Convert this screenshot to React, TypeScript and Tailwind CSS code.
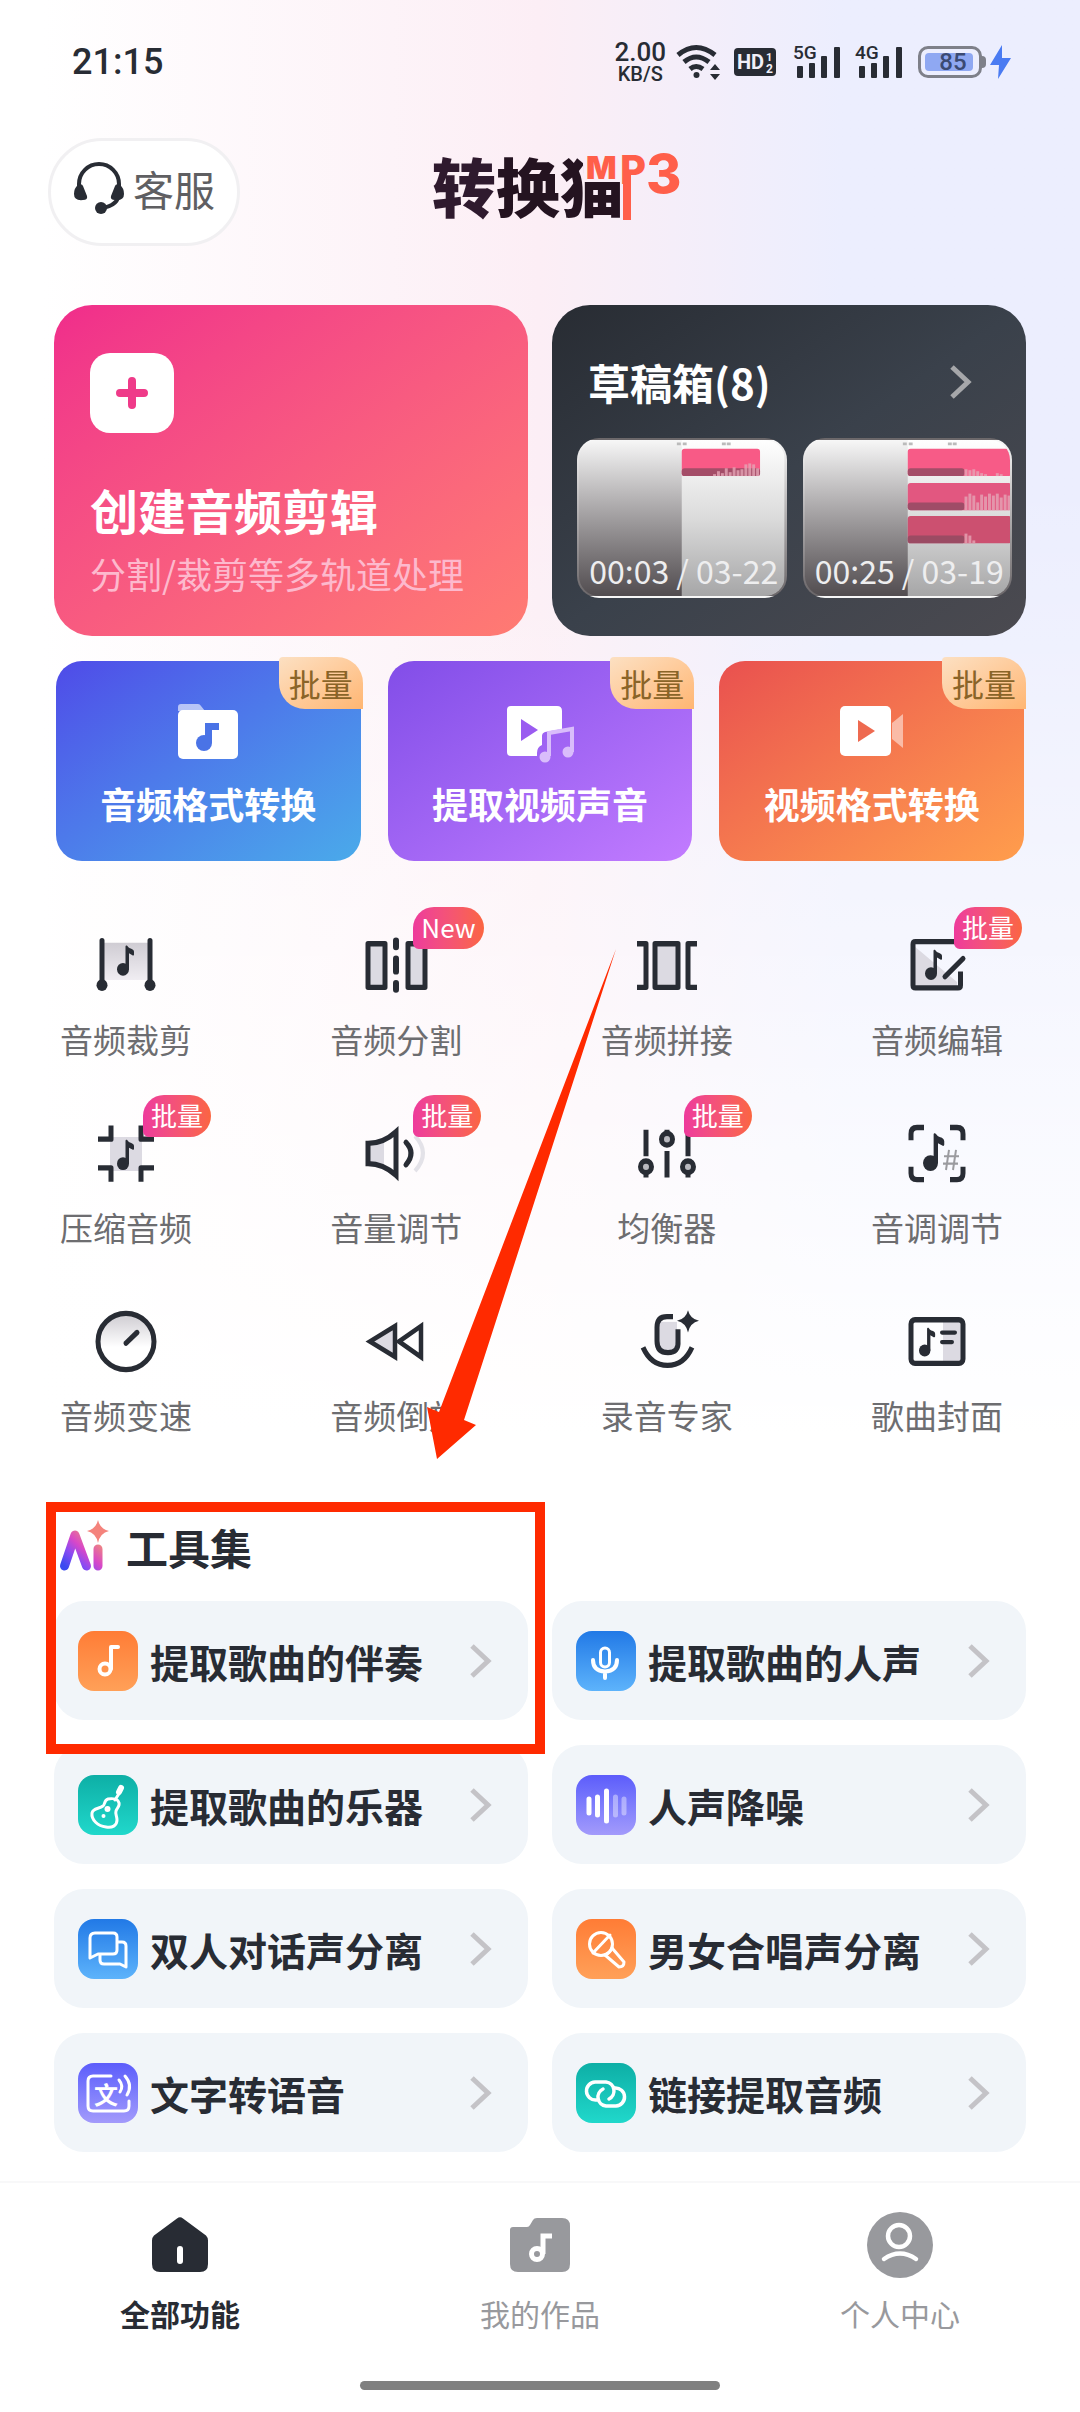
import type { ReactNode } from "react";

const INK = "#282c34";
const SHADE = "#dcdae2";

function Note({ x = 0, y = 0, s = 1 }: { x?: number; y?: number; s?: number }) {
  return (
    <g transform={`translate(${x} ${y}) scale(${s})`} fill={INK}>
      <circle cx="6" cy="22" r="6" />
      <path d="M8.5 0.5C8.5-.5 9.6-.7 10.4 0l1 1.2c1.500 1.500 5.600 1.300 5.600 4.300V8c0 1-.8 1.300-1.600.8L12 7v15H8.500z" />
    </g>
  );
}

function ToolSvg({ children }: { children: ReactNode }) {
  return (
    <svg
      viewBox="0 0 64 64"
      preserveAspectRatio="none"
      className="w-16 h-17 overflow-visible"
      fill="none"
      stroke={INK}
      strokeWidth="5"
      aria-hidden="true"
    >
      {children}
    </svg>
  );
}

const tools: { label: string; badge?: string; icon: ReactNode }[] = [
  {
    label: "音频裁剪",
    icon: (
      <ToolSvg>
        <defs>
          <linearGradient id="trim" x1="0" y1="0" x2="0" y2="1">
            <stop offset="0" stopColor="#cfccd3" />
            <stop offset="1" stopColor="#f0edf2" />
          </linearGradient>
        </defs>
        <path d="M8 11h48v35H8z" fill="url(#trim)" stroke="none" />
        <path d="M8 9v41M56 9v41" strokeLinecap="round" />
        <g fill={INK} stroke="none">
          <circle cx="8" cy="51" r="5.5" />
          <circle cx="56" cy="51" r="5.5" />
        </g>
        <g stroke="none"><Note x={23} y={14} /></g>
      </ToolSvg>
    ),
  },
  {
    label: "音频分割",
    badge: "New",
    icon: (
      <ToolSvg>
        <path d="M4 12h17v41H4zM44 12h17v41H44z" fill={SHADE} strokeLinejoin="round" />
        <path d="M32 9v6M32 26v12M32 49v6" strokeWidth="6" strokeLinecap="round" />
      </ToolSvg>
    ),
  },
  {
    label: "音频拼接",
    icon: (
      <ToolSvg>
        <path d="M20 12h23v41H20z" fill={SHADE} strokeLinejoin="round" />
        <path d="M2 12h9v41H2M62 12h-9v41h9" strokeLinejoin="round" />
      </ToolSvg>
    ),
  },
  {
    label: "音频编辑",
    badge: "批量",
    icon: (
      <ToolSvg>
        <path d="M9 14L52 48v5H9z" fill={SHADE} stroke="none" />
        <path d="M54 10H10.500Q8 10 8 12.500V51q0 2.500 2.500 2.500H53q2.500 0 2.500-2.500V38" />
        <path d="M40 43L58 26" strokeLinecap="round" />
        <g stroke="none"><Note x={20} y={18} /></g>
      </ToolSvg>
    ),
  },
  {
    label: "压缩音频",
    badge: "批量",
    icon: (
      <ToolSvg>
        <path d="M16 17h32v32H16z" fill={SHADE} stroke="none" />
        <path d="M4 19h13V6M60 19H47V6M4 46h13v13M60 46H47v13" strokeLinejoin="round" />
        <g stroke="none"><Note x={23} y={20} /></g>
      </ToolSvg>
    ),
  },
  {
    label: "音量调节",
    badge: "批量",
    icon: (
      <ToolSvg>
        <path d="M4 22h16v21H4z" fill={SHADE} stroke="none" />
        <path d="M4 23C15 23 24 19 32 12v41C24 46 15 42 4 42z" />
        <path d="M42 22q10 10 0 21" strokeLinecap="round" />
        <path d="M51 16q16 16 0 33" stroke="#e3e2e8" strokeWidth="4" />
      </ToolSvg>
    ),
  },
  {
    label: "均衡器",
    badge: "批量",
    icon: (
      <ToolSvg>
        <path d="M11 10v25M32 30v25M53 10v25M11 50v5M53 50v5M32 10v5" />
        <circle cx="11" cy="45" r="5.5" fill="#b9b9bf" />
        <circle cx="32" cy="19" r="5.5" fill="#b9b9bf" />
        <circle cx="53" cy="45" r="5.5" fill="#b9b9bf" />
      </ToolSvg>
    ),
  },
  {
    label: "音调调节",
    icon: (
      <ToolSvg>
        <path d="M6 20v-6q0-6 6-6h7M58 20v-6q0-6-6-6h-7M6 45v6q0 6 6 6h7M58 45v6q0 6-6 6h-7" />
        <g stroke="none"><Note x={18} y={14} s={1.25} /></g>
        <path d="M44 29l-3 19M51 29l-3 19M39 35h15M38 42h15" stroke="#9b9b9f" strokeWidth="2" />
      </ToolSvg>
    ),
  },
  {
    label: "音频变速",
    icon: (
      <ToolSvg>
        <defs>
          <linearGradient id="dial" x1="0" y1="0" x2="0" y2="1">
            <stop offset="0.1" stopColor="#d5d3d8" />
            <stop offset="0.6" stopColor="#fff" />
          </linearGradient>
        </defs>
        <ellipse cx="32" cy="32.5" rx="28" ry="26.5" fill="url(#dial)" />
        <path d="M32 34L43 24" strokeLinecap="round" />
      </ToolSvg>
    ),
  },
  {
    label: "音频倒放",
    icon: (
      <ToolSvg>
        <path d="M6 32.500L31 18v29z" fill={SHADE} strokeWidth="4.5" />
        <path d="M35 32.500L57 18v29z" strokeWidth="4.5" />
      </ToolSvg>
    ),
  },
  {
    label: "录音专家",
    icon: (
      <ToolSvg>
        <path d="M24 14h18v28H24z" fill={SHADE} stroke="none" />
        <path d="M38 9h-6q-10 0-10 10v13q0 11 11 11t10-11V21" />
        <path d="M8 38q8 17 24.500 17T57 38" />
        <path d="M53 3q2 8 11 10q-9 2-11 11q-2-9-11-11q9-2 11-10z" fill={INK} stroke="none" />
      </ToolSvg>
    ),
  },
  {
    label: "歌曲封面",
    icon: (
      <ToolSvg>
        <path d="M38 12h20v41H38z" fill={SHADE} stroke="none" />
        <rect x="6" y="12" width="52" height="41" rx="4" />
        <g stroke="none"><Note x={14} y={20} s={0.95} /></g>
        <path d="M37 24h13M37 33h10" strokeLinecap="round" strokeWidth="4" />
      </ToolSvg>
    ),
  },
];

function TileSvg({ children }: { children: ReactNode }) {
  return (
    <svg
      viewBox="0 0 60 60"
      className="w-full h-full"
      fill="none"
      stroke="#fff"
      strokeWidth="3"
      strokeLinecap="round"
      strokeLinejoin="round"
      aria-hidden="true"
    >
      {children}
    </svg>
  );
}

const ORANGE = "bg-linear-to-b from-[#ff7c35] to-[#ffa058]";
const BLUE = "bg-linear-to-b from-[#2179e6] to-[#5db3fb]";
const TEAL = "bg-linear-to-b from-[#0dafa6] to-[#20d8cb]";
const VIOLET = "bg-linear-to-b from-[#5d5cfb] to-[#a39afb]";

const aiTools: { label: string; tone: string; icon: ReactNode }[] = [
  {
    label: "提取歌曲的伴奏",
    tone: ORANGE,
    icon: (
      <TileSvg>
        <circle cx="27" cy="38" r="5.5" strokeWidth="4" />
        <path d="M33 38V16h7" strokeWidth="4" />
      </TileSvg>
    ),
  },
  {
    label: "提取歌曲的人声",
    tone: BLUE,
    icon: (
      <TileSvg>
        <rect x="24.5" y="17" width="9" height="19" rx="4.5" />
        <path d="M17 29q0 11 12 11.500Q41 40 41 29M29 41v6" strokeWidth="4" />
      </TileSvg>
    ),
  },
  {
    label: "提取歌曲的乐器",
    tone: TEAL,
    icon: (
      <TileSvg>
        <path d="M30 24c-4 1-3 6-5 7c-4 3-10 2-11 7c-1 7 6 13 14 14c6 1 11-1 11-7c0-4-2-6-1-9c1-3 4-5 3-8c-1-4-6-5-11-4z" />
        <circle cx="29.5" cy="34" r="3" fill="#fff" stroke="none" />
        <circle cx="25.5" cy="41" r="2" fill="#fff" stroke="none" />
        <path d="M37 25l5-8" />
        <path d="M41 17l2-4" strokeWidth="6" />
      </TileSvg>
    ),
  },
  {
    label: "人声降噪",
    tone: VIOLET,
    icon: (
      <TileSvg>
        <path d="M13 24v14M21.500 22v18M30.500 16v30" strokeWidth="5" />
        <path d="M39.500 22v18M48 24v14" strokeWidth="5" strokeOpacity="0.4" />
      </TileSvg>
    ),
  },
  {
    label: "双人对话声分离",
    tone: BLUE,
    icon: (
      <TileSvg>
        <path d="M17 14h18q4 0 4 4v13q0 4-4 4H20l-8 4V19q0-5 5-5z" />
        <path d="M40 23h4q4 0 4 4v21l-6-3H26q-4 0-4-4v-5" />
      </TileSvg>
    ),
  },
  {
    label: "男女合唱声分离",
    tone: ORANGE,
    icon: (
      <TileSvg>
        <circle cx="25" cy="25" r="11.5" />
        <path d="M34 16L17 34" />
        <path d="M36 29L48 43q0 5-5 5L29 36" />
        <path d="M36 29q-2 5-7 7" />
      </TileSvg>
    ),
  },
  {
    label: "文字转语音",
    tone: VIOLET,
    icon: (
      <TileSvg>
        <path d="M33 13H15q-5 0-5 5v25q0 5 5 5h31q5 0 5-5v-5" />
        <path d="M41 17q5 6 1 12M47 13q8 9 2 19" />
        <text
          x="28"
          y="41"
          textAnchor="middle"
          fontSize="24"
          fontWeight="700"
          fill="#fff"
          stroke="none"
        >
          文
        </text>
      </TileSvg>
    ),
  },
  {
    label: "链接提取音频",
    tone: TEAL,
    icon: (
      <TileSvg>
        <g strokeWidth="3.5">
          <path d="M21 37h-1a9 9 0 0 1-1-18h11a9 9 0 0 1 3 17" />
          <path d="M38 25h1a9 9 0 0 1 1 18H30a9 9 0 0 1-3-17" />
        </g>
      </TileSvg>
    ),
  },
];

const formats: { label: string; tone: string; icon: ReactNode }[] = [
  {
    label: "音频格式转换",
    tone: "bg-linear-to-br from-[#4f4ae8] to-[#4aaaea]",
    icon: (
      <svg viewBox="0 0 68 60" className="w-17 h-15" aria-hidden="true">
        <path d="M4 10V6q0-3 3-3h17q2 0 3 2l4 5z" fill="#fff" fillOpacity="0.6" />
        <rect x="4" y="9" width="60" height="49" rx="5" fill="#fff" />
        <g fill="#4a73e6">
          <circle cx="30" cy="42" r="8" />
          <path d="M31 22h14v7h-7v13h-7z" />
        </g>
      </svg>
    ),
  },
  {
    label: "提取视频声音",
    tone: "bg-linear-to-br from-[#824de8] to-[#c27bff]",
    icon: (
      <svg viewBox="0 0 68 60" className="w-17 h-15 overflow-visible" aria-hidden="true">
        <path
          d="M5 5h46q5 0 5 5v18l-17 3q-3 1-3 4v9q-5 2-5 8v3H5q-4 0-4-4V9q0-4 4-4z"
          fill="#fff"
        />
        <path d="M15 18l17 11-17 11z" fill="#9a5bf0" />
        <g fill="none" stroke="#d9bdfb" strokeWidth="4">
          <path d="M43 55V32l23-4v23" />
          <circle cx="39" cy="56" r="3.5" fill="#d9bdfb" />
          <circle cx="62" cy="51" r="3.5" fill="#d9bdfb" />
        </g>
      </svg>
    ),
  },
  {
    label: "视频格式转换",
    tone: "bg-linear-to-br from-[#e9504f] to-[#ff9d4c]",
    icon: (
      <svg viewBox="0 0 68 60" className="w-17 h-15" aria-hidden="true">
        <path d="M54 22l11-9v34l-11-9z" fill="#fff" fillOpacity="0.5" />
        <rect x="2" y="5" width="51" height="50" rx="5" fill="#fff" />
        <path d="M20 19l17 11-17 11z" fill="#ee6a50" />
      </svg>
    ),
  },
];

const drafts = [
  {
    text: "00:03 / 03-22",
    clips: [{ y: 9, w: 80, fill: "#f85a86", from: 32, wave: [2, 5, 3, 8, 4, 9, 6, 7, 12, 13, 12, 8] }],
  },
  {
    text: "00:25 / 03-19",
    clips: [
      { y: 9, w: 106, fill: "#f75b87", from: 58, wave: [7, 6, 7, 5, 3, 2, 0, 0, 3, 2, 0, 0] },
      { y: 44, w: 106, fill: "#e25780", from: 58, wave: [14, 17, 15, 8, 16, 14, 17, 15, 17, 13, 16, 15] },
      { y: 78, w: 106, fill: "#cc5070", from: 58, wave: [10, 8, 3, 0, 0, 0, 0, 0, 0, 0, 0, 0] },
    ],
  },
];

const tabs: { label: string; active?: boolean; icon: ReactNode }[] = [
  {
    label: "全部功能",
    active: true,
    icon: (
      <svg viewBox="0 0 68 68" className="w-17 h-17" aria-hidden="true">
        <path
          d="M31 7.500q3-2.500 6 0l23 17q2 2 2 5V53q0 8-8 8H14q-8 0-8-8V29.500q0-3 2-5z"
          fill={INK}
        />
        <path d="M34 38v12" stroke="#fff" strokeWidth="6" strokeLinecap="round" />
      </svg>
    ),
  },
  {
    label: "我的作品",
    icon: (
      <svg viewBox="0 0 68 68" className="w-17 h-17" aria-hidden="true">
        <path
          d="M7 16h14q2 0 3-2l3-5q1-2 4-2h25q8 0 8 8v38q0 8-8 8H12q-8 0-8-8V19q0-3 3-3z"
          fill="#98999d"
        />
        <g fill="none" stroke="#fff" strokeWidth="5">
          <circle cx="31" cy="43" r="5.5" />
          <path d="M37 43V25h9" />
        </g>
      </svg>
    ),
  },
  {
    label: "个人中心",
    icon: (
      <svg viewBox="0 0 68 68" className="w-17 h-17" aria-hidden="true">
        <circle cx="34" cy="34" r="33" fill="#98999d" />
        <g fill="none" stroke="#fff" strokeWidth="4.5" strokeLinecap="round">
          <circle cx="33" cy="25" r="11" />
          <path d="M18 48q16-11 32 0" />
        </g>
      </svg>
    ),
  },
];

function Chevron({ color }: { color: string }) {
  return (
    <svg viewBox="0 0 22 36" className="w-[22px] h-9 shrink-0" aria-hidden="true">
      <path d="M2 3l16 15L2 33" fill="none" stroke={color} strokeWidth="5" />
    </svg>
  );
}

function Signal({ label }: { label: string }) {
  return (
    <svg viewBox="0 0 48 36" className="w-12 h-9 overflow-visible" aria-hidden="true">
      <text x="-1" y="15" fontSize="19" fontWeight="500" fill={INK} fontFamily="Roboto, sans-serif">
        {label}
      </text>
      <g fill={INK}>
        <rect x="3" y="22" width="6" height="12" rx="1" />
        <rect x="15" y="19" width="6" height="15" rx="1" />
        <rect x="27" y="12" width="6" height="22" rx="1" />
        <rect x="40" y="3" width="6" height="31" rx="1" />
      </g>
    </svg>
  );
}

function StatusBar() {
  return (
    <div className="flex items-center justify-between h-31 pl-18 pr-17 text-[#282c34] font-[Roboto,sans-serif]">
      <span className="text-[36px] leading-none font-medium">21:15</span>

      <div className="flex items-center">
        <div className="flex flex-col items-center mr-2.5 font-medium">
          <span className="text-[26px] leading-6">2.00</span>
          <span className="text-[20px] leading-5">KB/S</span>
        </div>

        {/* Wifi */}
        <svg viewBox="0 0 44 36" className="w-11 h-9 mr-3.5" aria-hidden="true">
          <g fill="none" stroke={INK} strokeWidth="5">
            <path d="M2 11q18-15 37 0" />
            <path d="M8 18q12-10 25 0" />
            <path d="M14 25q6-5 13 0" />
          </g>
          <circle cx="20.5" cy="31" r="3" fill={INK} />
          <path d="M39 20l5 6H34zM39 36l5-6H34z" fill={INK} />
        </svg>

        {/* HD */}
        <svg viewBox="0 0 42 28" className="w-[42px] h-7 mr-4.5" aria-hidden="true">
          <rect width="42" height="28" rx="4" fill={INK} />
          <g fill="#f0eff8" fontFamily="Roboto, sans-serif" fontWeight="700">
            <text x="3" y="21" fontSize="20">HD</text>
            <text x="32" y="13" fontSize="11">1</text>
            <text x="32" y="25" fontSize="12">2</text>
          </g>
        </svg>

        <div className="flex gap-3.5 mr-3.5">
          <Signal label="5G" />
          <Signal label="4G" />
        </div>

        {/* Battery */}
        <div className="flex items-center mr-1">
          <div className="w-[64px] h-8 p-1 rounded-[10px] border-3 border-[#7e8089]">
            <div className="w-12 h-full rounded-[4px] bg-[#8fa8f2] flex items-center justify-center pl-2">
              <span className="text-[24px] leading-none font-medium text-[#3b4a73]">85</span>
            </div>
          </div>
          <div className="w-1 h-3 rounded-r bg-[#7e8089]" />
        </div>
        <svg viewBox="0 0 22 34" className="w-[22px] h-[34px]" aria-hidden="true">
          <path d="M12 0L0 20h9l-1 14 13-21h-9z" fill="#4a7bf2" />
        </svg>
      </div>
    </div>
  );
}

function Logo() {
  return (
    <h1 className="relative w-54 mb-4 text-[64px] leading-16 font-black whitespace-nowrap text-[#241320]">
      <span className="text-[#2f1a2e]">转</span>
      <span>换</span>
      {/* the grass radical is cut away and the M sits in its place */}
      <span className="inline-block [clip-path:polygon(0_0,36%_0,36%_44%,100%_44%,100%_110%,0_110%)]">
        猫
      </span>
      <span className="absolute left-[154px] top-0 font-[Inter,sans-serif] font-black text-[32px] leading-8 text-[#ff5f4a]">
        M
      </span>
      <span className="absolute left-[188px] top-0 font-[Inter,sans-serif] font-extrabold text-[40px] leading-9 text-[#ff5f4a]">
        P
      </span>
      <span className="absolute left-[191px] top-5 w-2 h-12 bg-[#ff5f4a]" />
      <span className="absolute left-[214px] top-0 font-[Inter,sans-serif] font-extrabold text-[54px] leading-11 text-[#ff5f4a]">
        3
      </span>
    </h1>
  );
}

function Header() {
  return (
    <header className="grid grid-cols-[1fr_auto_1fr] items-center px-12 pt-3.5">
      <button className="flex items-center justify-center gap-2 w-48 h-[108px] pb-2 rounded-full bg-white border-3 border-[#f1f0f2] text-[41px] leading-none text-[#5f5f62]">
        <svg viewBox="0 0 52 52" className="w-13 h-13" aria-hidden="true">
          <path d="M6 30V22a20 20 0 0 1 40 0v8q0 14-18 16" fill="none" stroke={INK} strokeWidth="4" />
          <path d="M5 23q4-2 5 1l4 10q1 4-4 4-9 1-9-6 0-6 4-9zM47 23q-4-2-5 1l-4 10q-1 4 4 4 9 1 9-6 0-6-4-9z" fill={INK} />
          <circle cx="28" cy="46" r="6" fill={INK} />
        </svg>
        客服
      </button>
      <Logo />
    </header>
  );
}

function DraftThumb({ draft, id }: { draft: (typeof drafts)[number]; id: string }) {
  return (
    <div className="relative flex-1 h-40 rounded-[22px] overflow-hidden border-2 border-white/15 bg-linear-to-b from-[#f7f7f7] to-[#524d50]">
      <svg viewBox="0 0 210 160" className="absolute inset-0 w-full h-full" preserveAspectRatio="none" aria-hidden="true">
        <defs>
          <linearGradient id={id} x1="0" y1="0" x2="0" y2="1">
            <stop offset="0" stopColor="#fff" />
            <stop offset="0.5" stopColor="#dbdbdb" />
            <stop offset="1" stopColor="#a6a6a7" />
          </linearGradient>
        </defs>
        <path d="M105 0h105v160H105z" fill={`url(#${id})`} />
        <path d="M100 4h4M106 4h4M146 4h4M151 4h4" stroke="#bbb" strokeWidth="3" />
        {draft.clips.map((clip) => (
          <g key={clip.y}>
            <rect x="105" y={clip.y} width={clip.w} height="28" rx="3" fill={clip.fill} />
            <rect x="105" y={clip.y + 20} width={clip.w === 80 ? 80 : 58} height="8" rx="3" fill="#8f4a60" fillOpacity="0.8" />
            {clip.wave.map((h, i) => (
              <rect
                key={i}
                x={105 + clip.from + i * 4}
                y={clip.y + 28 - h}
                width="3"
                height={h}
                fill="#e5a5b5"
                fillOpacity="0.8"
              />
            ))}
          </g>
        ))}
      </svg>
      <p className="absolute inset-x-0 bottom-1.5 pl-1 text-center text-[32px] leading-10 whitespace-nowrap text-[#eeeeef]">
        {draft.text}
      </p>
    </div>
  );
}

function HeroCards() {
  return (
    <section className="grid grid-cols-2 gap-6 px-[54px] mt-[59px]">
      <button className="flex flex-col items-start h-[331px] rounded-[38px] pl-9 pt-12 text-left text-white bg-linear-to-br from-[#f02c8b] to-[#ff7b72]">
        <span className="flex items-center justify-center w-21 h-20 rounded-[20px] bg-white">
          <svg viewBox="0 0 32 32" className="w-8 h-8" aria-hidden="true">
            <path d="M16 4v24M4 16h24" stroke="#ef3a89" strokeWidth="8" strokeLinecap="round" />
          </svg>
        </span>
        <span className="mt-11 text-[48px] leading-16 font-bold">创建音频剪辑</span>
        <span className="mt-2 text-[36px] leading-12 text-[#fdb9cd]">分割/裁剪等多轨道处理</span>
      </button>

      <div className="h-[331px] rounded-[38px] bg-linear-to-br from-[#282c33] via-[#3a414b] to-[#4b4a50]">
        <a href="#drafts" className="flex items-center justify-between h-[133px] pl-9 pr-[54px] pt-5 text-white">
          <span className="text-[42px] leading-14 font-bold">草稿箱(8)</span>
          <Chevron color="#a6a7aa" />
        </a>
        <div className="flex gap-4 pl-[25px] pr-3.5">
          {drafts.map((draft, i) => (
            <DraftThumb key={draft.text} draft={draft} id={`draft-${i}`} />
          ))}
        </div>
      </div>
    </section>
  );
}

function FormatCards() {
  return (
    <section className="grid grid-cols-3 gap-[27px] px-14 mt-[25px]">
      {formats.map((item) => (
        <button
          key={item.label}
          className={`relative flex flex-col items-center h-[200px] rounded-[26px] pt-10 text-white ${item.tone}`}
        >
          {item.icon}
          <span className="mt-[18px] text-[36px] leading-12 font-bold">{item.label}</span>
          <span className="absolute -top-1 -right-0.5 w-21 h-[52px] rounded-tr-[26px] rounded-bl-[26px] rounded-tl-sm text-[32px] leading-13 text-[#8a6428] bg-linear-to-br from-[#fce0c2] to-[#ffb672]">
            批量
          </span>
        </button>
      ))}
    </section>
  );
}

function ToolGrid() {
  return (
    <section className="relative grid grid-cols-[repeat(4,132px)] justify-between gap-y-14 pl-15 pr-[77px] mt-[70px]">
      {tools.map((tool) => (
        <button key={tool.label} className="relative flex flex-col items-center">
          {tool.icon}
          <span className="mt-4 text-[33px] leading-12 text-[#6d6d70]">{tool.label}</span>
          {tool.badge && (
            <span className="absolute -top-6 left-[83px] px-2 h-[42px] rounded-[22px] rounded-bl-md text-[26px] leading-10 whitespace-nowrap text-white bg-linear-to-r from-[#ee3a9c] to-[#fb6540]">
              {tool.badge}
            </span>
          )}
        </button>
      ))}

      {/* Arrow pointing at the AI tools */}
      <svg
        viewBox="0 0 190 510"
        className="absolute left-[427px] top-[18px] w-[190px] h-[510px] pointer-events-none"
        aria-hidden="true"
      >
        <path d="M189 0L12 463 0 458l10 52 39-34-12-5z" fill="#ff2a00" />
      </svg>
    </section>
  );
}

function AiSection() {
  return (
    <section className="relative mx-[54px] mt-[82px]">
      <div className="flex items-center h-13">
        <svg viewBox="0 0 50 50" className="w-[50px] h-[50px] ml-1.5 overflow-visible" aria-hidden="true">
          <defs>
            <linearGradient id="ai" x1="0" y1="1" x2="1" y2="0">
              <stop offset="0" stopColor="#3a4af0" />
              <stop offset="0.3" stopColor="#8b4bf2" />
              <stop offset="0.55" stopColor="#d847c8" />
              <stop offset="1" stopColor="#f59a6a" />
            </linearGradient>
          </defs>
          <path
            d="M4.500 44L15 13L26.500 44M38 27v17"
            fill="none"
            stroke="url(#ai)"
            strokeWidth="9"
            strokeLinecap="round"
            strokeLinejoin="round"
          />
          <path d="M38-2q2 9 11 11q-9 2-11 12q-2-10-11-12q9-2 11-11z" fill="#f4837c" />
        </svg>
        <h2 className="ml-4 text-[42px] leading-13 font-bold text-[#282c34]">工具集</h2>
      </div>

      <div className="grid grid-cols-2 gap-x-6 gap-y-[25px] mt-7">
        {aiTools.map((tool) => (
          <a
            key={tool.label}
            href="#tool"
            className="flex items-center h-[119px] pl-6 pr-9 rounded-[30px] bg-[#f1f5f9]"
          >
            <span className={`w-15 h-15 rounded-2xl shrink-0 ${tool.tone}`}>{tool.icon}</span>
            <span className="flex-1 ml-3 text-[39px] leading-14 font-bold whitespace-nowrap text-[#282c34]">
              {tool.label}
            </span>
            <Chevron color="#c4c3c7" />
          </a>
        ))}
      </div>

      {/* Highlight frame */}
      <div className="absolute -left-2 -top-[19px] w-[calc(50%+13px)] h-[252px] border-10 border-[#ff2a00] pointer-events-none" />
    </section>
  );
}

function TabBar() {
  return (
    <nav className="mt-[29px] border-t-2 border-[#f8f8f9] bg-white">
      <div className="grid grid-cols-3 pt-7">
        {tabs.map((tab) => (
          <button
            key={tab.label}
            className={`flex flex-col items-center text-[30px] leading-10 ${
              tab.active ? "font-bold text-[#282c34]" : "text-[#98999d]"
            }`}
          >
            {tab.icon}
            <span className="mt-3.5">{tab.label}</span>
          </button>
        ))}
      </div>
      <div className="w-1/3 h-[9px] mx-auto mt-12 mb-[22px] rounded-full bg-[#808080]" />
    </nav>
  );
}

export default function App() {
  return (
    <div className="min-h-screen bg-white font-['Noto_Sans_CJK_SC',sans-serif]">
      <div className="bg-linear-to-r from-white from-4% via-[#fceef5] via-50% to-[#eceefe] to-78%">
        <div className="bg-linear-to-b from-white/0 from-20% to-white to-60%">
          <StatusBar />
          <Header />
          <main>
            <HeroCards />
            <FormatCards />
            <ToolGrid />
            <AiSection />
          </main>
          <TabBar />
        </div>
      </div>
    </div>
  );
}
